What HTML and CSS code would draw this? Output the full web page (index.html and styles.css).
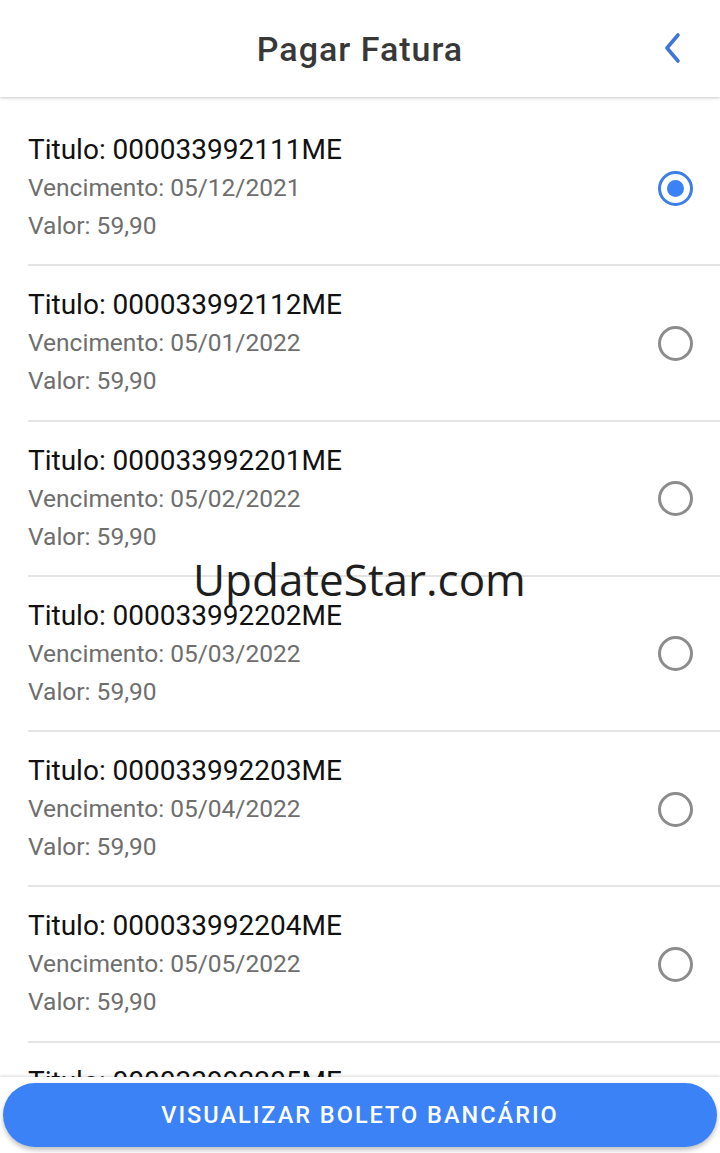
FILE: index.html
```html
<!DOCTYPE html>
<html lang="pt-BR">
<head>
  <meta charset="UTF-8" />
  <meta name="viewport" content="width=device-width, initial-scale=1" />
  <title>Pagar Fatura</title>
  <link rel="stylesheet" href="styles.css">
</head>
<body>
  <div class="screen">
    <header class="topbar">
      <h1>Pagar Fatura</h1>
      <a class="back" href="#">
        <svg width="20" height="32" viewBox="0 0 20 32"><path d="M16 3 L5 16 L16 29" fill="none" stroke="#4175d6" stroke-width="3.6" stroke-linecap="round" stroke-linejoin="round"/></svg>
      </a>
    </header>

    <ul class="list">
      <li class="item">
        <div class="info">
          <div class="titulo">Titulo: 000033992111ME</div>
          <div class="sub">Vencimento: 05/12/2021</div>
          <div class="sub">Valor: 59,90</div>
        </div>
        <span class="radio checked"></span>
      </li>
      <li class="item">
        <div class="info">
          <div class="titulo">Titulo: 000033992112ME</div>
          <div class="sub">Vencimento: 05/01/2022</div>
          <div class="sub">Valor: 59,90</div>
        </div>
        <span class="radio"></span>
      </li>
      <li class="item">
        <div class="info">
          <div class="titulo">Titulo: 000033992201ME</div>
          <div class="sub">Vencimento: 05/02/2022</div>
          <div class="sub">Valor: 59,90</div>
        </div>
        <span class="radio"></span>
      </li>
      <li class="item">
        <div class="info">
          <div class="titulo">Titulo: 000033992202ME</div>
          <div class="sub">Vencimento: 05/03/2022</div>
          <div class="sub">Valor: 59,90</div>
        </div>
        <span class="radio"></span>
      </li>
      <li class="item">
        <div class="info">
          <div class="titulo">Titulo: 000033992203ME</div>
          <div class="sub">Vencimento: 05/04/2022</div>
          <div class="sub">Valor: 59,90</div>
        </div>
        <span class="radio"></span>
      </li>
      <li class="item">
        <div class="info">
          <div class="titulo">Titulo: 000033992204ME</div>
          <div class="sub">Vencimento: 05/05/2022</div>
          <div class="sub">Valor: 59,90</div>
        </div>
        <span class="radio"></span>
      </li>
      <li class="item">
        <div class="info">
          <div class="titulo">Titulo: 000033992205ME</div>
          <div class="sub">Vencimento: 05/06/2022</div>
          <div class="sub">Valor: 59,90</div>
        </div>
        <span class="radio"></span>
      </li>
    </ul>

    <footer class="bottombar">
      <button type="button">VISUALIZAR BOLETO BANCÁRIO</button>
    </footer>

    <div class="watermark">UpdateStar.com</div>
  </div>
</body>
</html>
```

FILE: styles.css
```css
* {
  box-sizing: border-box;
}
body {
  margin: 0;
  font-family: Roboto, "Liberation Sans", sans-serif;
  background: #fff;
}
.screen {
  position: relative;
  width: 720px;
  height: 1153px;
  display: flex;
  flex-direction: column;
  overflow: hidden;
}
.topbar {
  height: 97px;
  flex-shrink: 0;
  display: flex;
  align-items: center;
  justify-content: center;
  position: relative;
  background: #fff;
  box-shadow: 0 1px 3px rgba(0,0,0,0.22);
  z-index: 2;
}
.topbar h1 {
  margin: 0;
  font-size: 34px;
  font-weight: 500;
  letter-spacing: 1px;
  color: #383838;
}
.back {
  position: absolute;
  right: 38px;
  top: 32px;
  display: block;
  line-height: 0;
}
.list {
  flex: 1;
  margin: 0;
  padding: 14px 0 0 28px;
  list-style: none;
  overflow: hidden;
}
.item {
  display: flex;
  align-items: center;
  padding: 20px 0 19.25px;
  border-bottom: 2px solid #e4e4e4;
}
.info {
  flex: 1;
}
.titulo {
  font-size: 28px;
  line-height: 38px;
  color: #111;
}
.sub {
  font-size: 24.5px;
  line-height: 38px;
  color: #6e6e6e;
}
.radio {
  width: 35px;
  height: 35px;
  margin-right: 27px;
  border: 3px solid #8c8c8c;
  border-radius: 50%;
  display: flex;
  align-items: center;
  justify-content: center;
}
.radio.checked {
  border-color: #3d7fe6;
}
.radio.checked::after {
  content: "";
  width: 17px;
  height: 17px;
  border-radius: 50%;
  background: #3b82f6;
}
.bottombar {
  flex-shrink: 0;
  height: 76px;
  padding: 6px 3px;
  background: #fff;
  box-shadow: 0 -1px 3px rgba(0,0,0,0.15);
  z-index: 2;
}
.bottombar button {
  width: 100%;
  height: 64px;
  border: none;
  border-radius: 32px;
  background: #3b82f6;
  color: #fff;
  font-family: Roboto, "Liberation Sans", sans-serif;
  font-size: 23.5px;
  font-weight: 500;
  letter-spacing: 2px;
  box-shadow: 0 3px 5px rgba(0,0,0,0.25);
}
.watermark {
  position: absolute;
  left: 193px;
  top: 551px;
  font-family: "Open Sans", "Noto Sans", sans-serif;
  font-size: 44px;
  color: #1e1e1e;
  line-height: 56px;
  z-index: 3;
}
```
